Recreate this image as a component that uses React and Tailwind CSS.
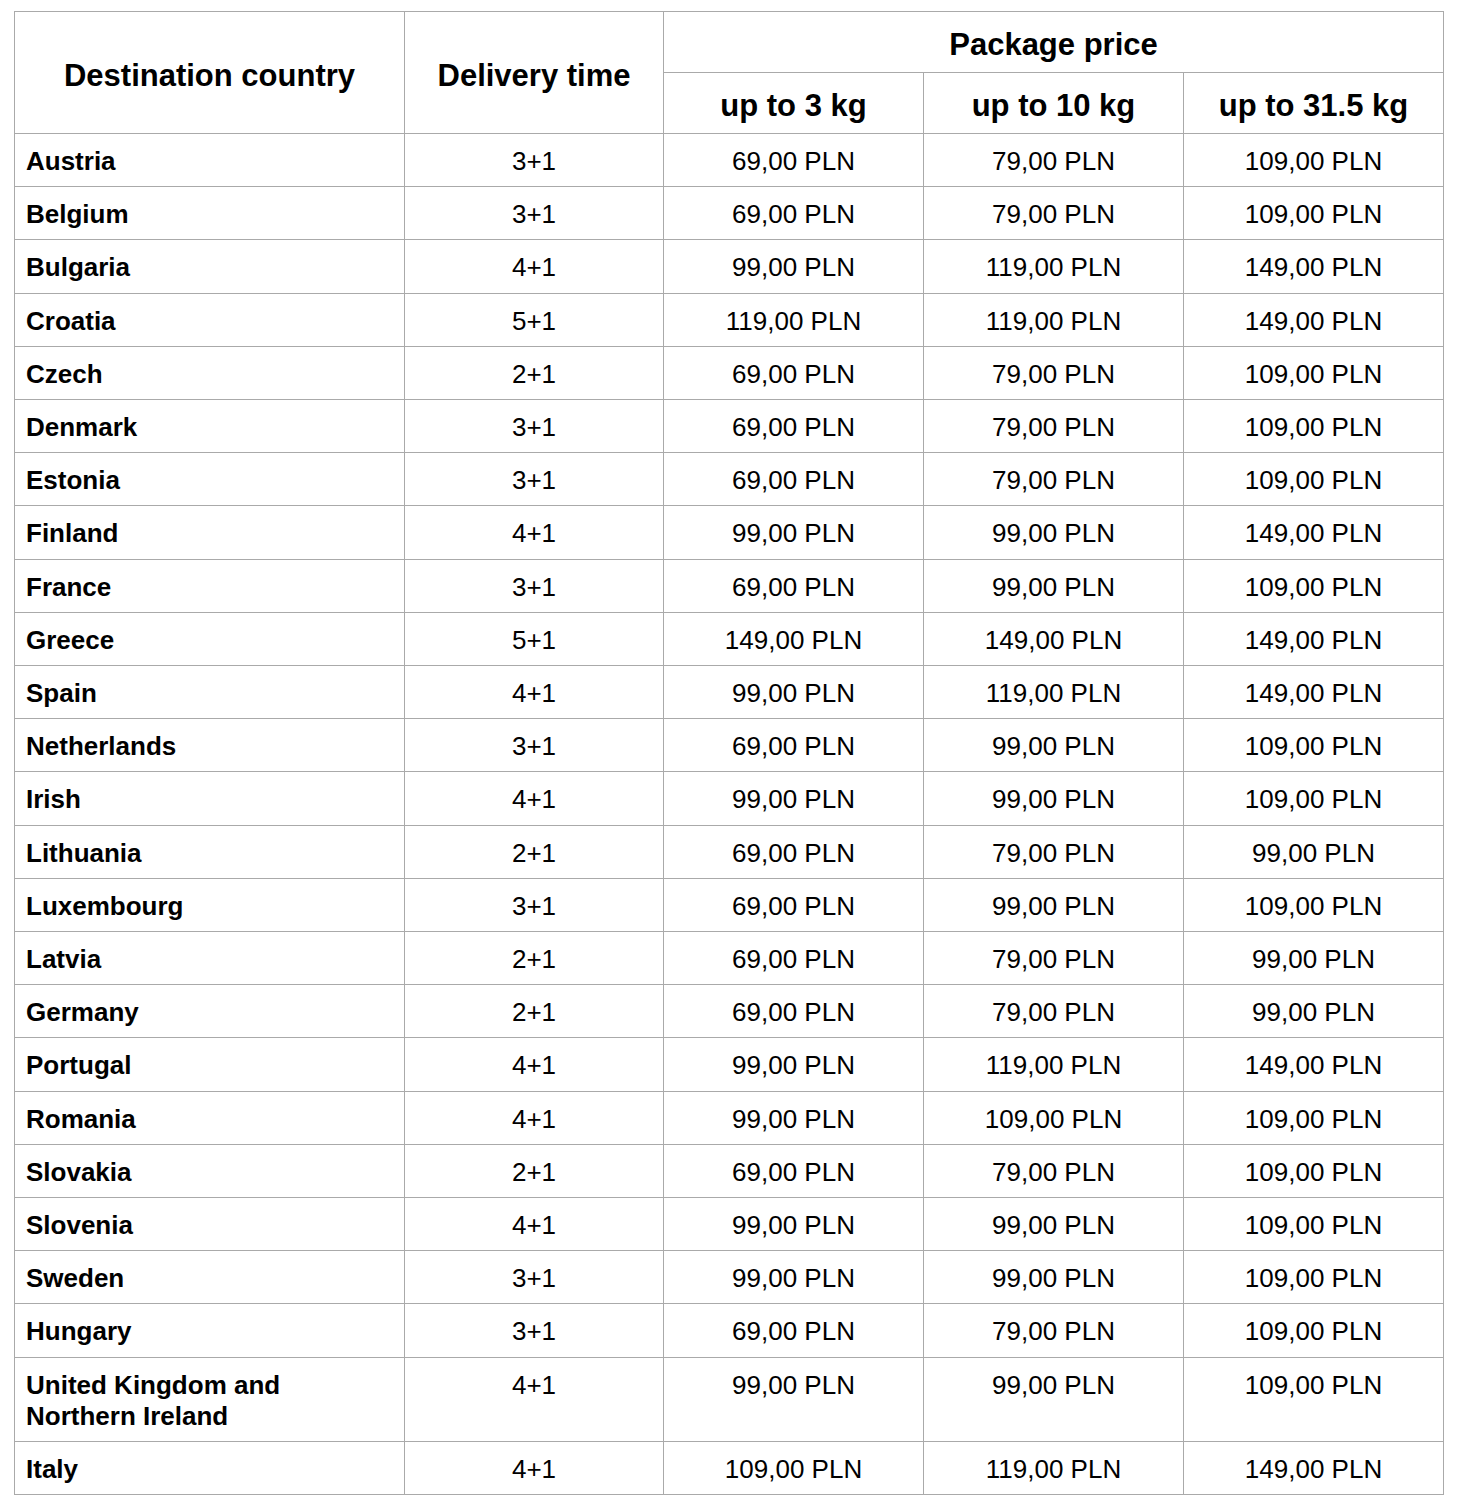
const rows = [
  ['Austria', '3+1', '69,00 PLN', '79,00 PLN', '109,00 PLN'],
  ['Belgium', '3+1', '69,00 PLN', '79,00 PLN', '109,00 PLN'],
  ['Bulgaria', '4+1', '99,00 PLN', '119,00 PLN', '149,00 PLN'],
  ['Croatia', '5+1', '119,00 PLN', '119,00 PLN', '149,00 PLN'],
  ['Czech', '2+1', '69,00 PLN', '79,00 PLN', '109,00 PLN'],
  ['Denmark', '3+1', '69,00 PLN', '79,00 PLN', '109,00 PLN'],
  ['Estonia', '3+1', '69,00 PLN', '79,00 PLN', '109,00 PLN'],
  ['Finland', '4+1', '99,00 PLN', '99,00 PLN', '149,00 PLN'],
  ['France', '3+1', '69,00 PLN', '99,00 PLN', '109,00 PLN'],
  ['Greece', '5+1', '149,00 PLN', '149,00 PLN', '149,00 PLN'],
  ['Spain', '4+1', '99,00 PLN', '119,00 PLN', '149,00 PLN'],
  ['Netherlands', '3+1', '69,00 PLN', '99,00 PLN', '109,00 PLN'],
  ['Irish', '4+1', '99,00 PLN', '99,00 PLN', '109,00 PLN'],
  ['Lithuania', '2+1', '69,00 PLN', '79,00 PLN', '99,00 PLN'],
  ['Luxembourg', '3+1', '69,00 PLN', '99,00 PLN', '109,00 PLN'],
  ['Latvia', '2+1', '69,00 PLN', '79,00 PLN', '99,00 PLN'],
  ['Germany', '2+1', '69,00 PLN', '79,00 PLN', '99,00 PLN'],
  ['Portugal', '4+1', '99,00 PLN', '119,00 PLN', '149,00 PLN'],
  ['Romania', '4+1', '99,00 PLN', '109,00 PLN', '109,00 PLN'],
  ['Slovakia', '2+1', '69,00 PLN', '79,00 PLN', '109,00 PLN'],
  ['Slovenia', '4+1', '99,00 PLN', '99,00 PLN', '109,00 PLN'],
  ['Sweden', '3+1', '99,00 PLN', '99,00 PLN', '109,00 PLN'],
  ['Hungary', '3+1', '69,00 PLN', '79,00 PLN', '109,00 PLN'],
  ['United Kingdom and Northern Ireland', '4+1', '99,00 PLN', '99,00 PLN', '109,00 PLN'],
  ['Italy', '4+1', '109,00 PLN', '119,00 PLN', '149,00 PLN'],
]

const th = 'border border-[#aaaaaa] text-center align-middle font-bold text-[31px] leading-[38px] pt-[14px] pb-[8px]'
const td = 'border border-[#aaaaaa] align-top text-[26px] leading-[31.2px] pt-[12px] pb-[9px]'

export default function App() {
  return (
    <div className="bg-white min-h-[1512px] pl-[14px] pt-[11px] text-black font-['Liberation_Sans',Arial,sans-serif]">
      <table className="table-fixed border-collapse w-[1429px]">
        <colgroup>
          <col className="w-[390px]" />
          <col className="w-[259px]" />
          <col className="w-[260px]" />
          <col className="w-[260px]" />
          <col className="w-[260px]" />
        </colgroup>
        <thead>
          <tr>
            <th rowSpan={2} className={th}>Destination country</th>
            <th rowSpan={2} className={th}>Delivery time</th>
            <th colSpan={3} className={th}>Package price</th>
          </tr>
          <tr>
            <th className={th}>up to 3 kg</th>
            <th className={th}>up to 10 kg</th>
            <th className={th}>up to 31.5 kg</th>
          </tr>
        </thead>
        <tbody>
          {rows.map((r) => (
            <tr key={r[0]}>
              <td className={`${td} font-bold text-left pl-[11px] pr-[60px]`}>{r[0]}</td>
              <td className={`${td} text-center`}>{r[1]}</td>
              <td className={`${td} text-center`}>{r[2]}</td>
              <td className={`${td} text-center`}>{r[3]}</td>
              <td className={`${td} text-center`}>{r[4]}</td>
            </tr>
          ))}
        </tbody>
      </table>
    </div>
  )
}
